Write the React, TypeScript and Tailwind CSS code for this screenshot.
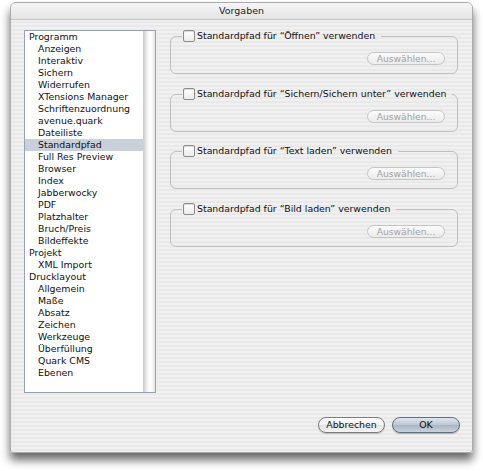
import React from "react";

const items: [string, number][] = [
  ["Programm", 0],
  ["Anzeigen", 1],
  ["Interaktiv", 1],
  ["Sichern", 1],
  ["Widerrufen", 1],
  ["XTensions Manager", 1],
  ["Schriftenzuordnung", 1],
  ["avenue.quark", 1],
  ["Dateiliste", 1],
  ["Standardpfad", 1],
  ["Full Res Preview", 1],
  ["Browser", 1],
  ["Index", 1],
  ["Jabberwocky", 1],
  ["PDF", 1],
  ["Platzhalter", 1],
  ["Bruch/Preis", 1],
  ["Bildeffekte", 1],
  ["Projekt", 0],
  ["XML Import", 1],
  ["Drucklayout", 0],
  ["Allgemein", 1],
  ["Maße", 1],
  ["Absatz", 1],
  ["Zeichen", 1],
  ["Werkzeuge", 1],
  ["Überfüllung", 1],
  ["Quark CMS", 1],
  ["Ebenen", 1],
];

const groups = [
  "Standardpfad für \u201CÖffnen\u201D verwenden",
  "Standardpfad für \u201CSichern/Sichern unter\u201D verwenden",
  "Standardpfad für \u201CText laden\u201D verwenden",
  "Standardpfad für \u201CBild laden\u201D verwenden",
];

function Group({ label, mt }: { label: string; mt: string }) {
  return (
    <fieldset
      className={`${mt} h-[44px] border border-[#bfbfbf] rounded-[6px] pl-[11px] pr-[12px] flex flex-col min-w-0`}
    >
      <legend className="pl-[1px] pr-[6px] h-[12px] whitespace-nowrap">
        <span className="flex items-center h-[12px] whitespace-nowrap">
          <span className="shrink-0 w-[12px] h-[12px] rounded-[2px] border border-[#8c8c8c] bg-[linear-gradient(to_bottom,#ffffff,#ececec)] shadow-[inset_0_1px_1px_rgba(0,0,0,0.15)]" />
          <span className="ml-[2px] text-[9.4px] leading-[12px] text-[#111] whitespace-nowrap">{label}</span>
        </span>
      </legend>
      <div className="flex justify-end pt-[10px]">
        <div className="w-[78px] h-[13px] rounded-full border border-[#c4c4c4] bg-[linear-gradient(to_bottom,#fbfbfb,#ebebeb)] flex items-center justify-center text-[9.2px] leading-none text-[#a2a2a2]">
          Auswählen...
        </div>
      </div>
    </fieldset>
  );
}

export default function App() {
  return (
    <div
      className="w-[483px] h-[471px] bg-white overflow-hidden pt-[2px] pl-[10px]"
      style={{ fontFamily: '"DejaVu Sans", "Liberation Sans", sans-serif' }}
    >
      <div className="w-[463px] h-[451px] rounded-t-[6px] rounded-b-[3px] border border-[#ababab] shadow-[0_7px_10px_rgba(0,0,0,0.6)] bg-[repeating-linear-gradient(to_bottom,#f0f0f0_0px,#f0f0f0_2px,#e9e9e9_2px,#e9e9e9_4px)] flex flex-col overflow-hidden">
        <div className="h-[17px] shrink-0 flex items-center justify-center bg-[linear-gradient(to_bottom,#f6f6f6,#e4e4e4)] border-b border-[#c4c4c4] text-[9.5px] text-[#222]">
          Vorgaben
        </div>
        <div className="flex-1 flex flex-col pl-[13px] pt-[10px] pr-[12px] pb-[19px]">
          <div className="flex">
            <div className="w-[132px] h-[363px] border border-[#94a2b6] bg-white flex">
              <div className="flex-1 flex flex-col">
                {items.map(([t, lvl]) => (
                  <div
                    key={t}
                    className={`h-[12px] leading-[12px] text-[9.4px] text-[#111] whitespace-nowrap ${
                      lvl ? "pl-[13px]" : "pl-[4px]"
                    } ${t === "Standardpfad" ? "bg-[#c9d0d9]" : ""}`}
                  >
                    {t}
                  </div>
                ))}
              </div>
              <div className="w-[12px] border-l border-[#cfcfcf] bg-[linear-gradient(to_right,#d2d2d2,#f6f6f6_35%,#ffffff_60%,#e6e6e6)]" />
            </div>
            <div className="ml-[14px] w-[288px] flex flex-col">
              <Group label={groups[0]} mt="mt-0" />
              <Group label={groups[1]} mt="mt-[14px]" />
              <Group label={groups[2]} mt="mt-[13px]" />
              <Group label={groups[3]} mt="mt-[14px]" />
            </div>
          </div>
          <div className="mt-auto flex justify-end gap-[7px]">
            <div className="w-[67px] h-[16px] rounded-full border border-[#7a7a7a] bg-[linear-gradient(to_bottom,#ffffff,#f2f2f2_50%,#e2e2e2_51%,#f6f6f6)] flex items-center justify-center text-[9.4px] leading-none text-[#111] shadow-[0_1px_1px_rgba(0,0,0,0.2)]">
              Abbrechen
            </div>
            <div className="w-[68px] h-[16px] rounded-full border border-[#5e6e84] bg-[linear-gradient(to_bottom,#dfe5ec,#bcc6d2_50%,#a9b5c4_51%,#c9d2dc)] flex items-center justify-center text-[9.4px] leading-none text-[#111] shadow-[0_1px_1px_rgba(0,0,0,0.25)]">
              OK
            </div>
          </div>
        </div>
      </div>
    </div>
  );
}
